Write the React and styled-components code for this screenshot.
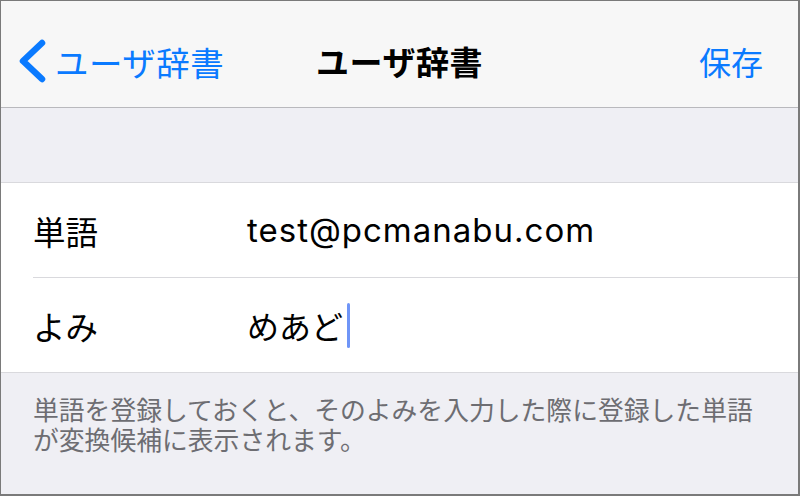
import styled, { createGlobalStyle } from 'styled-components';

const GlobalStyle = createGlobalStyle`
  * {
    box-sizing: border-box;
  }

  body {
    margin: 0;
    background: #ffffff;
    font-family: Inter, 'Noto Sans CJK JP', sans-serif;
  }
`;

const Frame = styled.div`
  width: 800px;
  height: 496px;
  display: flex;
  flex-direction: column;
  background: #efeff4;
  border: 1px solid #7a7a7a;
  border-right-width: 2px;
  border-bottom-width: 2px;
  overflow: hidden;
`;

const NavBar = styled.header`
  height: 107px;
  flex-shrink: 0;
  display: grid;
  grid-template-columns: 1fr auto 1fr;
  align-items: center;
  padding: 14px 17px 0 17px;
  background: #f7f7f7;
  border-bottom: 1px solid #b9b9bd;
`;

const BackButton = styled.div`
  display: flex;
  align-items: center;
  gap: 9px;
  color: #0a7aff;
  font-family: 'Noto Sans CJK JP', sans-serif;
  font-size: 33.5px;
  letter-spacing: 0.5px;
  justify-self: start;
`;

const NavTitle = styled.h1`
  margin: 0;
  color: #000000;
  font-family: 'Noto Sans CJK JP', sans-serif;
  font-size: 33px;
  font-weight: 700;
  letter-spacing: 0.5px;
`;

const SaveButton = styled.div`
  justify-self: end;
  margin-right: 18px;
  color: #0a7aff;
  font-family: 'Noto Sans CJK JP', sans-serif;
  font-size: 32px;
`;

const Gap = styled.div`
  height: 74px;
  flex-shrink: 0;
`;

const Group = styled.section`
  background: #ffffff;
  border-top: 1px solid #d9d9dd;
  border-bottom: 1px solid #d9d9dd;
  padding-left: 32px;
`;

const Row = styled.div`
  height: ${({ $last }) => ($last ? '94px' : '95px')};
  display: flex;
  align-items: center;
  border-bottom: ${({ $last }) => ($last ? 'none' : '1px solid #d9d9dd')};
`;

const Label = styled.span`
  width: 214px;
  flex-shrink: 0;
  color: #000000;
  font-family: 'Noto Sans CJK JP', sans-serif;
  font-size: 32.5px;
`;

const Value = styled.span`
  display: flex;
  align-items: center;
  color: #000000;
  font-family: Inter, 'Noto Sans CJK JP', sans-serif;
  font-size: ${({ $latin }) => ($latin ? '33px' : '32px')};
  letter-spacing: ${({ $latin }) => ($latin ? '1px' : '0')};
`;

const Caret = styled.span`
  width: 3px;
  height: 45px;
  margin-left: 4px;
  border-radius: 2px;
  background: #6f95f7;
`;

const Note = styled.p`
  margin: 0;
  padding: 21px 32px 0 32px;
  color: #6d6d72;
  font-family: 'Noto Sans CJK JP', sans-serif;
  font-size: 25.8px;
  line-height: 30px;
`;

function Chevron() {
  return (
    <svg width="28" height="44" viewBox="0 0 28 44" fill="none">
      <polyline
        points="24,4 5,22 24,40"
        stroke="#0a7aff"
        strokeWidth="6.5"
        strokeLinecap="round"
        strokeLinejoin="round"
      />
    </svg>
  );
}

export default function App() {
  return (
    <>
      <GlobalStyle />
      <Frame>
        <NavBar>
          <BackButton>
            <Chevron />
            ユーザ辞書
          </BackButton>
          <NavTitle>ユーザ辞書</NavTitle>
          <SaveButton>保存</SaveButton>
        </NavBar>
        <Gap />
        <Group>
          <Row>
            <Label>単語</Label>
            <Value $latin>test@pcmanabu.com</Value>
          </Row>
          <Row $last>
            <Label>よみ</Label>
            <Value>
              めあど
              <Caret />
            </Value>
          </Row>
        </Group>
        <Note>
          単語を登録しておくと、そのよみを入力した際に登録した単語が変換候補に表示されます。
        </Note>
      </Frame>
    </>
  );
}
